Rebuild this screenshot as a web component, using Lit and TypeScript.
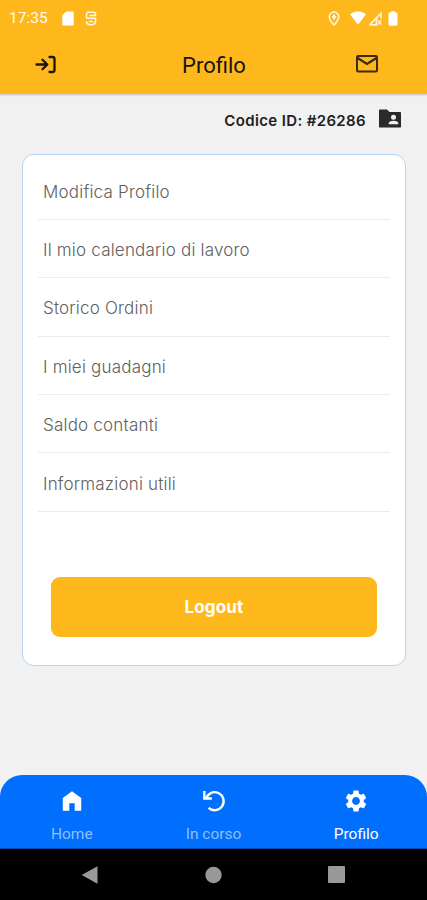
import { LitElement, html, css, svg } from "lit";
import { customElement, property } from "lit/decorators.js";
import { classMap } from "lit/directives/class-map.js";

const ROWS = [
  "Modifica Profilo",
  "Il mio calendario di lavoro",
  "Storico Ordini",
  "I miei guadagni",
  "Saldo contanti",
  "Informazioni utili",
];

@customElement("status-bar")
class StatusBar extends LitElement {
  static styles = css`
    :host { display: flex; align-items: center; height: 36px; padding: 0 29px 0 9px; box-sizing: border-box; color: #fff; }
    .time { font: 400 15.5px/20px Roboto, sans-serif; width: 52.5px; opacity: 0.95; }
    svg { display: block; fill: currentColor; }
    .debug { margin-left: 11.5px; opacity: 0.9; }
    .spacer { flex: 1; }
    .wifi { margin-left: 10px; }
    .signal { margin-left: 2px; opacity: 0.85; }
    .battery { margin-left: 6px; }
    .pin { opacity: 0.9; }
  `;
  render() {
    return html`
      <span class="time">17:35</span>
      <svg width="12" height="15" viewBox="0 0 12 15"><path d="M4.2 .5H10.5Q11.7.5 11.7 1.7V13.3Q11.7 14.5 10.5 14.5H1.5Q.3 14.5.3 13.3V4.4Z" /></svg>
      <svg class="debug" width="12" height="15" viewBox="0 0 12 15">
        <path d="M1.500 7.300V3.300Q1.500 1.200 3.500 1.200H8.500Q10.500 1.200 10.500 3.300V4.500H4.500M1.500 7.300H10.500V10Q10.500 13.700 6 13.700T1.500 10.200M4 10.500H8" fill="none" stroke="currentColor" stroke-width="1.600" />
      </svg>
      <span class="spacer"></span>
      <svg class="pin" width="12" height="15" viewBox="0 0 12 15">
        <path d="M6 1a4.700 4.700 0 0 0-4.700 4.800C1.300 9.300 6 14 6 14s4.700-4.700 4.700-8.200A4.700 4.700 0 0 0 6 1Z" fill="none" stroke="currentColor" stroke-width="1.500" />
        <path d="M6 3.300V8.500M3.800 5.800H8.200" stroke="currentColor" stroke-width="1.700" />
      </svg>
      <svg class="wifi" width="16" height="14" viewBox="0 0 16 14"><path d="M0 3.300Q8-2.700 16 3.300L8 13.700Z" /></svg>
      <svg class="signal" width="14" height="15" viewBox="0 0 14 15">
        <path d="M1.500 13.800L13 2.200V7.500M1.500 13.800H9.500M8.500 7V13.500" fill="none" stroke="currentColor" stroke-width="1.700" />
        <path d="M10.300 9.500l3 4M13.300 9.500l-3 4" stroke="currentColor" stroke-width="1.300" />
      </svg>
      <svg class="battery" width="10" height="15" viewBox="0 0 10 15"><path d="M3 .3H7V1.500H8.200Q9.500 1.500 9.500 2.800V13.300Q9.500 14.700 8.200 14.700H1.800Q.5 14.700.5 13.300V2.800Q.5 1.500 1.800 1.500H3Z" /></svg>
    `;
  }
}

@customElement("menu-card")
class MenuCard extends LitElement {
  static styles = css`
    :host { display: block; box-sizing: border-box; width: 384px; height: 512px; margin-left: 22px; padding: 7px 15px 0; border: 1.500px solid #b4d3f8; border-radius: 12px; background: #fff; }
    .row { display: flex; align-items: center; height: 58.400px; padding: 3px 0 0 5px; box-sizing: border-box; border-bottom: 1.500px solid #ececec; font: 300 17px/24px Inter, sans-serif; letter-spacing: 0.2px; color: #606060; white-space: nowrap; }
    .logout { display: flex; align-items: center; justify-content: center; width: 326px; height: 60px; margin: 65px 0 0 13px; border: 0; border-radius: 9px; background: #ffb81c; color: #fff; font: 700 17px/24px Inter, sans-serif; letter-spacing: 0.15px; padding: 1px 0 0; }
  `;
  render() {
    return html`
      ${ROWS.map((r) => html`<div class="row"><span>${r}</span></div>`)}
      <button class="logout">Logout</button>
    `;
  }
}

const TABS = [
  { label: "Home", icon: svg`<path d="M12 3L3.500 9.200V21H9.500V14H14.500V21H20.500V9.200Z" />` },
  { label: "In corso", icon: svg`<path d="M4.600 10A8.300 8.300 0 1 1 7 18.300" fill="none" stroke="currentColor" stroke-width="2.200" /><path d="M2 2.800H4.200V8.600H10V10.800H2Z" />` },
  { label: "Profilo", icon: svg`<path d="M19.140 12.940c.04-.3.06-.61.06-.94 0-.32-.02-.64-.07-.94l2.030-1.580c.18-.14.23-.41.12-.61l-1.920-3.320c-.12-.22-.37-.29-.59-.22l-2.390.96c-.5-.38-1.030-.7-1.620-.94l-.36-2.540c-.04-.24-.24-.41-.48-.41h-3.840c-.24 0-.43.17-.47.41l-.36 2.540c-.59.24-1.130.57-1.620.94l-2.390-.96c-.22-.08-.47 0-.59.22L2.740 8.870c-.12.21-.08.47.12.61l2.030 1.580c-.05.3-.09.63-.09.94s.02.64.07.94l-2.030 1.580c-.18.14-.23.41-.12.61l1.920 3.320c.12.22.37.29.59.22l2.390-.96c.5.38 1.030.7 1.620.94l.36 2.540c.05.24.24.41.48.41h3.840c.24 0 .44-.17.47-.41l.36-2.540c.59-.24 1.130-.56 1.620-.94l2.390.96c.22.08.47 0 .59-.22l1.920-3.320c.12-.22.07-.47-.12-.61l-2.010-1.580zM12 15.600c-1.980 0-3.600-1.620-3.600-3.600s1.620-3.600 3.600-3.600 3.600 1.620 3.600 3.600-1.620 3.600-3.600 3.600z" />` },
];

@customElement("tab-bar")
class TabBar extends LitElement {
  @property({ type: Number }) active = 2;
  static styles = css`
    :host { display: flex; box-sizing: border-box; height: 74px; padding-left: 1px; background: #006ffd; border-radius: 22px 22px 0 0; border-bottom: 1px solid #0050b8; }
    .tab { flex: 1; display: flex; flex-direction: column; align-items: center; padding-top: 13px; color: #fff; }
    .tab:last-child { padding-left: 1px; }
    .tab svg { width: 26px; height: 26px; fill: currentColor; }
    .label { margin-top: 10px; font: 400 15.500px/20px Roboto, sans-serif; color: #8fbffe; }
    .on .label { color: #fff; }
  `;
  render() {
    return TABS.map(
      (t, i) => html`<div class=${classMap({ tab: true, on: i === this.active })}>
        <svg viewBox="0 0 24 24">${t.icon}</svg><span class="label">${t.label}</span>
      </div>`
    );
  }
}

@customElement("app-root")
class AppRoot extends LitElement {
  static styles = css`
    :host { display: flex; flex-direction: column; width: 427px; height: 900px; overflow: hidden; background: #f1f1f1; }
    svg { display: block; }
    .top { flex: none; height: 94px; background: #ffb81c; box-shadow: 0 1px 2px rgba(0, 0, 0, 0.2); }
    .bar { display: grid; grid-template-columns: 90px 1fr 120px; align-items: center; height: 58px; }
    .enter { margin-left: 34px; }
    .mail { margin-left: 48px; }
    .title { text-align: center; font: 400 22px/28px Roboto, sans-serif; color: #181510; padding: 1px 0 0 31px; }
    .code { display: flex; align-items: center; justify-content: flex-end; height: 59.500px; box-sizing: border-box; padding: 0 26px 10px 0; gap: 13px; font: 600 15px/20px Inter, sans-serif; letter-spacing: 0.36px; color: #202020; }
    .code span { padding-top: 5px; }
    .fill { flex: 1; }
    .android { flex: none; display: flex; align-items: center; justify-content: space-between; height: 51px; box-sizing: border-box; padding: 0 82px 0 81px; background: #000; }
  `;
  render() {
    return html`
      <header class="top">
        <status-bar></status-bar>
        <div class="bar">
          <svg class="enter" width="24" height="20" viewBox="0 0 24 20" fill="none" stroke="#1c1608" stroke-width="2.300" stroke-linecap="round" stroke-linejoin="round">
            <path d="M2.500 9.500H13M8.500 4.700L13.300 9.500L8.500 14.300M15.500 2H18.500Q20.500 2 20.500 4V15Q20.500 17 18.500 17H15.500" />
          </svg>
          <div class="title">Profilo</div>
          <svg class="mail" width="24" height="20" viewBox="0 0 24 20" fill="none" stroke="#3a2c0a" stroke-width="2">
            <rect x="2" y="1" width="20" height="15.500" rx="1.200" /><path d="M2.500 3L12 9L21.500 3" stroke-width="2.300" />
          </svg>
        </div>
      </header>
      <div class="code">
        <span>Codice ID: #26286</span>
        <svg width="22" height="19" viewBox="0 0 22 19">
          <path d="M0 1.200Q0 .5.700.5H8L10.500 3H21.300Q22 3 22 3.700V17.800Q22 18.500 21.300 18.500H.700Q0 18.500 0 17.800Z" fill="#2a2a2a" />
          <circle cx="14.500" cy="8.300" r="2.500" fill="#f1f1f1" /><path d="M9.700 15.300V14Q10.500 11.800 14.500 11.800T19.300 14V15.300Z" fill="#f1f1f1" />
        </svg>
      </div>
      <menu-card></menu-card>
      <div class="fill"></div>
      <tab-bar></tab-bar>
      <nav class="android">
        <svg width="17" height="20" viewBox="0 0 17 20"><path d="M16.500 1.200V18.800L.7 10Z" fill="#999" /></svg>
        <svg width="17" height="18" viewBox="0 0 17 18"><circle cx="8.500" cy="9" r="8.200" fill="#999" /></svg>
        <svg width="17" height="17" viewBox="0 0 17 17"><rect width="17" height="17" rx="1" fill="#999" /></svg>
      </nav>
    `;
  }
}
